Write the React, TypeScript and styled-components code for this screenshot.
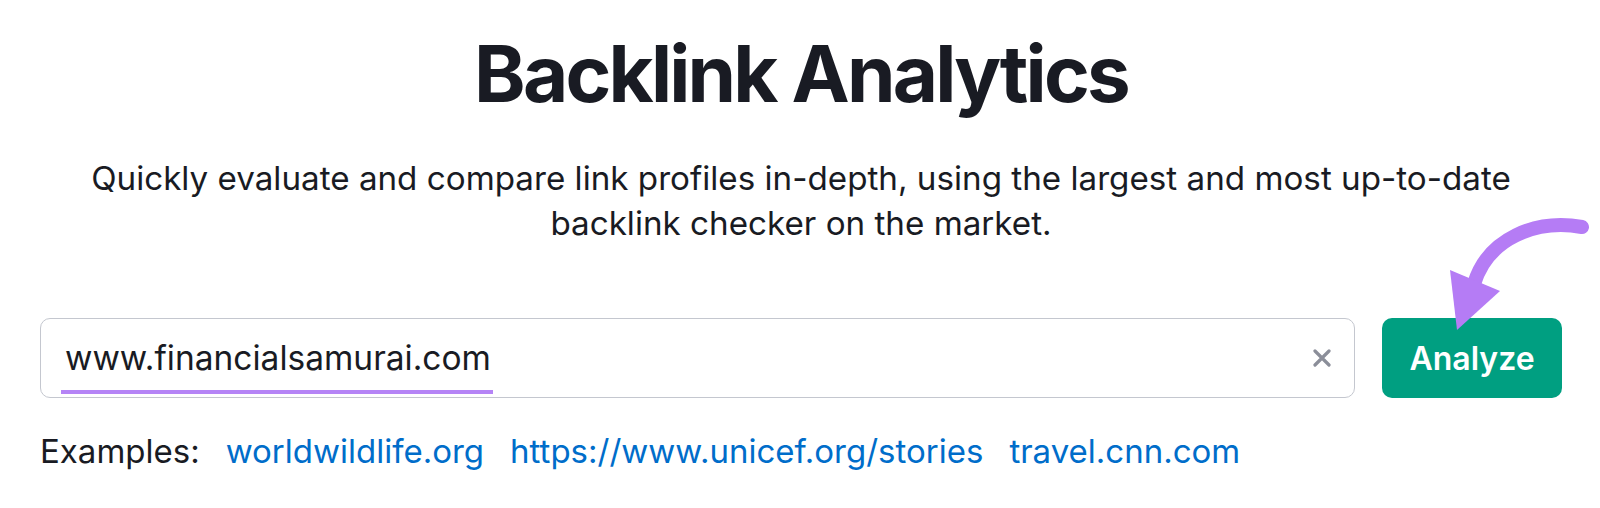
import React from 'react';
import styled, { createGlobalStyle } from 'styled-components';

const GlobalStyle = createGlobalStyle`
    html, body {
        margin: 0;
        padding: 0;
        background: #fff;
    }
    body {
        font-family: Inter, 'Noto Sans', sans-serif;
        color: #191b23;
    }
`;

const Page = styled.div`
    position: relative;
    width: 1600px;
    height: 508px;
    box-sizing: border-box;
    padding: 34px 38px 0 40px;
    display: flex;
    flex-direction: column;
    align-items: center;
`;

const Title = styled.h1`
    margin: 0;
    font-size: 78px;
    line-height: 80px;
    font-weight: 700;
    letter-spacing: -2.8px;
`;

const Subtitle = styled.p`
    margin: 42px 0 0;
    max-width: 1490px;
    font-size: 33.2px;
    line-height: 45px;
    text-align: center;
`;

const NoWrap = styled.span`
    white-space: nowrap;
`;

const SearchRow = styled.div`
    align-self: stretch;
    margin-top: 72px;
    display: flex;
    gap: 27px;
`;

const InputBox = styled.div`
    flex: 1;
    height: 80px;
    box-sizing: border-box;
    border: 1.5px solid #c4c7cf;
    border-radius: 10px;
    display: flex;
    align-items: center;
    padding: 0 22px 0 24px;
`;

const InputText = styled.span`
    position: relative;
    flex: 1;
    font-size: 33.5px;
    color: #191b23;

    &::after {
        content: '';
        position: absolute;
        left: -4px;
        width: 432px;
        bottom: -16px;
        height: 4px;
        background: #b584f6;
    }
`;

const Clear = styled.button`
    border: 0;
    background: none;
    padding: 0;
    width: 20px;
    height: 20px;
    display: flex;
    align-items: center;
    justify-content: center;
`;

const AnalyzeButton = styled.button`
    width: 180px;
    height: 80px;
    border: 0;
    border-radius: 10px;
    background: #009f81;
    color: #fff;
    font-family: Inter, 'Noto Sans', sans-serif;
    font-size: 32px;
    font-weight: 600;
`;

const Examples = styled.div`
    align-self: stretch;
    margin-top: 33px;
    display: flex;
    gap: 26px;
    font-size: 33px;
    line-height: 40px;
`;

const ExampleLink = styled.a`
    color: #006dca;
    text-decoration: none;
`;

const Arrow = styled.svg`
    position: absolute;
    left: 1430px;
    top: 202px;
`;

const App: React.FC = () => {
    return (
        <Page>
            <GlobalStyle />
            <Title>Backlink Analytics</Title>
            <Subtitle>
                Quickly evaluate and compare link profiles in-depth, using the largest and most <NoWrap>up-to-date</NoWrap>{' '}
                backlink checker on the market.
            </Subtitle>
            <SearchRow>
                <InputBox>
                    <InputText>www.financialsamurai.com</InputText>
                    <Clear>
                        <svg width="18" height="18" viewBox="0 0 18 18">
                            <path d="M2 2 L16 16 M16 2 L2 16" stroke="#8b8e99" strokeWidth="3.2" strokeLinecap="round" />
                        </svg>
                    </Clear>
                </InputBox>
                <AnalyzeButton>Analyze</AnalyzeButton>
            </SearchRow>
            <Examples>
                <span>Examples:</span>
                <ExampleLink href="#">worldwildlife.org</ExampleLink>
                <ExampleLink href="#">https://www.unicef.org/stories</ExampleLink>
                <ExampleLink href="#">travel.cnn.com</ExampleLink>
            </Examples>
            <Arrow width="170" height="140" viewBox="0 0 170 140">
                {/* curved pointer from the right edge down to the button */}
                <path d="M152 25 C106 17 58 36 44 82" fill="none" stroke="#b57cf5" strokeWidth="14" strokeLinecap="round" />
                <polygon points="20,68 70,89 27,128" fill="#b57cf5" />
            </Arrow>
        </Page>
    );
};

export default App;
